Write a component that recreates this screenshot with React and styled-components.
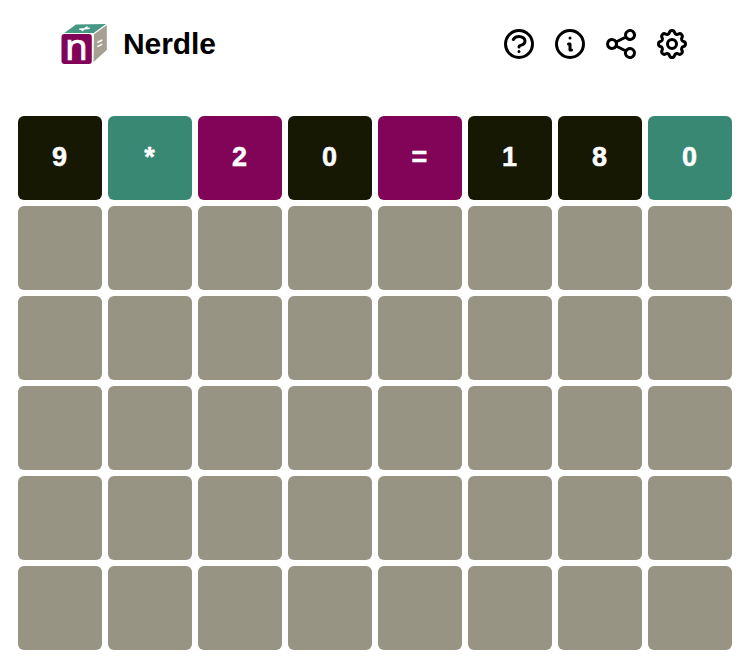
import React from "react";
import styled, { createGlobalStyle } from "styled-components";
import {
  HiOutlineQuestionMarkCircle,
  HiOutlineInformationCircle,
  HiOutlineShare,
  HiOutlineCog,
} from "react-icons/hi";

const GlobalStyle = createGlobalStyle`
  body {
    margin: 0;
    background-color: #fff;
    color: #000;
    font-family: Arial, "Liberation Sans", sans-serif;
  }
`;

const Container = styled.div`
  display: flex;
  flex-direction: column;
`;

const HeaderNav = styled.header`
  display: flex;
  flex-direction: row;
  justify-content: space-between;
  align-items: center;
  height: 88px;
  padding: 0 61px 0 60px;
`;

const AppName = styled.div`
  display: flex;
  flex-direction: row;
  align-items: center;
  gap: 15px;
`;

const LogoIcon = styled.svg`
  display: block;
  width: 48px;
  height: 44px;
  overflow: visible;
`;

const LogoLetter = styled.text`
  fill: #fff;
  font-family: "Noto Sans", "Open Sans", sans-serif;
  font-size: 37px;
  stroke: #fff;
  stroke-width: 0.7px;
`;

const Title = styled.h1`
  margin: 0;
  font-size: 30px;
  font-weight: bold;
  line-height: 36px;
  letter-spacing: -0.1px;
`;

const Menu = styled.nav`
  display: flex;
  flex-direction: row;
  gap: 15px;
`;

const MenuButton = styled.button`
  display: flex;
  padding: 0;
  border: none;
  background: none;
  color: #000;
  font-size: 36px;
  cursor: pointer;
`;

const Board = styled.main`
  display: flex;
  flex-direction: column;
  gap: 6px;
  padding: 28px 18px 12px;
`;

const Row = styled.div`
  display: flex;
  flex-direction: row;
  gap: 6px;
`;

const colors = {
  empty: "#989484",
  correct: "#398874",
  present: "#820458",
  absent: "#161803",
};

const Tile = styled.div`
  display: flex;
  justify-content: center;
  align-items: center;
  box-sizing: border-box;
  width: 84px;
  height: 84px;
  padding: 0 1px 2px 0;
  border-radius: 6px;
  background-color: ${({ $status }) => colors[$status]};
  color: white;
  font-size: 27px;
  font-weight: bold;
  line-height: 32px;
  -webkit-text-stroke: 0.5px white;
`;

const guess = [
  { value: "9", status: "absent" },
  { value: "*", status: "correct" },
  { value: "2", status: "present" },
  { value: "0", status: "absent" },
  { value: "=", status: "present" },
  { value: "1", status: "absent" },
  { value: "8", status: "absent" },
  { value: "0", status: "correct" },
];

const emptyRow = Array(8).fill({ value: "", status: "empty" });
const rows = [guess, ...Array(5).fill(emptyRow)];

const Logo = () => (
  <LogoIcon viewBox="0 0 48 44">
    <path d="M4.3 11 16 2.5 46 2 33.6 11Z" fill="#469783" />
    <path d="M34 12.2 46.8 3V28L33.5 40Z" fill="#a5a091" />
    <rect x="1.5" y="12" width="30.3" height="30" rx="3" fill="#820458" />
    <path
      d="M19.3 7.3 29.7 6.2M21.7 8.9 27.5 4.5M37.3 20.5l5-2.5M37.3 24.7l5-2.6"
      stroke="#fff"
      strokeWidth="1.4"
    />
    <LogoLetter x="5" y="38">
      n
    </LogoLetter>
  </LogoIcon>
);

const Header = () => {
  return (
    <HeaderNav>
      <AppName>
        <Logo />
        <Title>Nerdle</Title>
      </AppName>
      <Menu>
        <MenuButton aria-label="Help">
          <HiOutlineQuestionMarkCircle />
        </MenuButton>
        <MenuButton aria-label="Info">
          <HiOutlineInformationCircle />
        </MenuButton>
        <MenuButton aria-label="Share">
          <HiOutlineShare />
        </MenuButton>
        <MenuButton aria-label="Settings">
          <HiOutlineCog />
        </MenuButton>
      </Menu>
    </HeaderNav>
  );
};

const App = () => {
  return (
    <Container>
      <GlobalStyle />
      <Header />
      <Board>
        {rows.map((row, i) => (
          <Row key={i}>
            {row.map((tile, j) => (
              <Tile key={j} $status={tile.status}>
                {tile.value}
              </Tile>
            ))}
          </Row>
        ))}
      </Board>
    </Container>
  );
};

export default App;
